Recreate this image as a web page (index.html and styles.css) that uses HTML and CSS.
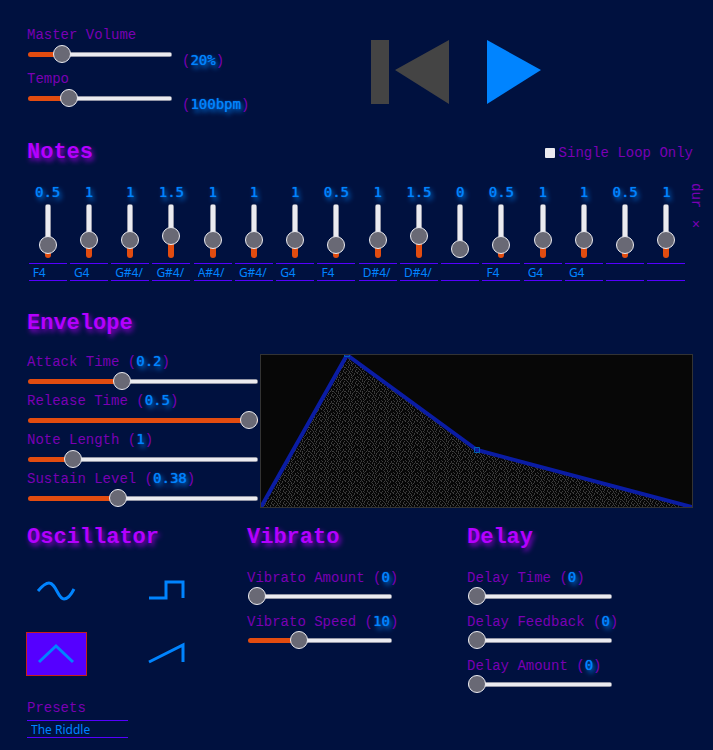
FILE: index.html
```html
<!DOCTYPE html>
<html lang="en">
<head>
<meta charset="utf-8">
<title>Synth</title>
<link rel="stylesheet" href="styles.css">
</head>
<body>
<header class="top">
  <div class="controls">
    <div class="control"><label for="volume">Master Volume</label><div class="line"><input class="slider" id="volume" type="range" value="20" style="--p:20%"><span class="readout">(<output class="value">20%</output>)</span></div></div>
    <div class="control"><label for="tempo">Tempo</label><div class="line"><input class="slider" id="tempo" type="range" value="25" style="--p:25%"><span class="readout">(<output class="value">100bpm</output>)</span></div></div>
  </div>
  <div class="transport">
    <button type="button" aria-label="Rewind"><svg width="78" height="64" viewBox="0 0 78 64"><path fill="#444" d="M0 0h18v64H0zM24 30 78 0v64z"/></svg></button>
    <button type="button" aria-label="Play"><svg width="54" height="64" viewBox="0 0 54 64"><path fill="#0084ff" d="M0 0 54 30 0 64z"/></svg></button>
  </div>
</header>

<section class="notes">
  <div class="notes-head">
    <h2>Notes</h2>
    <label class="loop"><input type="checkbox">Single Loop Only</label>
  </div>
  <div class="sequence">
    <div class="steps" id="steps"></div>
    <span class="duration">dur ×</span>
  </div>
</section>

<section class="envelope">
  <h2>Envelope</h2>
  <div class="envelope-body">
    <div class="controls tight">
      <div class="control"><label for="attack">Attack Time (<output class="value">0.2</output>)</label><input class="slider" id="attack" type="range" value="40" style="--p:40%"></div>
      <div class="control"><label for="release">Release Time (<output class="value">0.5</output>)</label><input class="slider" id="release" type="range" value="100" style="--p:100%"></div>
      <div class="control"><label for="length">Note Length (<output class="value">1</output>)</label><input class="slider" id="length" type="range" value="17" style="--p:17%"></div>
      <div class="control"><label for="sustain">Sustain Level (<output class="value">0.38</output>)</label><input class="slider" id="sustain" type="range" value="38" style="--p:38%"></div>
    </div>
    <svg class="graph" viewBox="0 0 431 152" preserveAspectRatio="none">
      <defs>
        <pattern id="grain" width="12" height="12" patternUnits="userSpaceOnUse">
          <path stroke="#404040" stroke-dasharray="1 2 1 1 1 3 1 1" d="M0 .5h12M2 2.5h10M1 4.5h11M0 6.5h11M3 8.5h9M1 10.5h10"/>
          <path stroke="#333" stroke-dasharray="1 3 1 2" d="M1 1.5h10M3 3.5h9M0 5.5h12M2 7.5h10M0 9.5h11M3 11.5h9"/>
        </pattern>
      </defs>
      <path fill="url(#grain)" d="M0 152 86 0 216 95 431 152z"/>
      <path fill="none" stroke="#0a1ca4" stroke-width="4" d="M0 152 86 0 216 95 431 152"/>
      <path fill="none" stroke="#0060b0" d="M83.500-2.500h5v4h-5zM213.500 92.500h5v5h-5z"/>
    </svg>
  </div>
</section>

<main class="modules">
  <section>
    <h2>Oscillator</h2>
    <div class="waves">
      <button type="button" aria-label="Sine"><svg viewBox="0 0 61 44"><path d="M12 23C17 17 20 15 23 15C30 15 32 31 38 31C42 31 45 27 48 21"/></svg></button>
      <button type="button" aria-label="Square"><svg viewBox="0 0 61 44"><path d="M12 30H29V14H46V30"/></svg></button>
      <button type="button" class="selected" aria-label="Triangle"><svg viewBox="0 0 61 44"><path d="M13 30 30 14 47 30"/></svg></button>
      <button type="button" aria-label="Sawtooth"><svg viewBox="0 0 61 44"><path d="M12 30 46 13V30"/></svg></button>
    </div>
    <div class="presets"><label for="preset">Presets</label><select id="preset"><option>The Riddle</option></select></div>
  </section>
  <section>
    <h2>Vibrato</h2>
    <div class="controls">
      <div class="control"><label for="vamount">Vibrato Amount (<output class="value">0</output>)</label><input class="slider" id="vamount" type="range" value="0" style="--p:0%"></div>
      <div class="control"><label for="vspeed">Vibrato Speed (<output class="value">10</output>)</label><input class="slider" id="vspeed" type="range" value="33" style="--p:33%"></div>
    </div>
  </section>
  <section>
    <h2>Delay</h2>
    <div class="controls">
      <div class="control"><label for="dtime">Delay Time (<output class="value">0</output>)</label><input class="slider" id="dtime" type="range" value="0" style="--p:0%"></div>
      <div class="control"><label for="dfeedback">Delay Feedback (<output class="value">0</output>)</label><input class="slider" id="dfeedback" type="range" value="0" style="--p:0%"></div>
      <div class="control"><label for="damount">Delay Amount (<output class="value">0</output>)</label><input class="slider" id="damount" type="range" value="0" style="--p:0%"></div>
    </div>
  </section>
</main>
<script src="script.js"></script>
</body>
</html>
```
FILE: script.js
```js
const notes = [
  [0.5, "F4"], [1, "G4"], [1, "G#4/"], [1.5, "G#4/"],
  [1, "A#4/"], [1, "G#4/"], [1, "G4"], [0.5, "F4"],
  [1, "D#4/"], [1.5, "D#4/"], [0, ""], [0.5, "F4"],
  [1, "G4"], [1, "G4"], [0.5, ""], [1, ""]
];

document.getElementById("steps").innerHTML = notes.map(([length, pitch], i) => `
  <div class="step">
    <label class="value" for="step${i}">${length}</label>
    <input class="slider vertical" id="step${i}" type="range" min="0" max="4" step="0.5" value="${length}" style="--p:${length * 25}%">
    <select aria-label="Pitch ${i + 1}"><option>${pitch}</option></select>
  </div>`).join("");
```
FILE: styles.css
```css
* { box-sizing: border-box; }

body {
  margin: 0;
  padding: 26px 20px 10px 27px;
  background: #00113f;
  color: #7a00b4;
  font: 14px/18px "Courier New", "Liberation Mono", monospace;
}

h2 {
  margin: 0;
  color: #b400ff;
  font-size: 22px;
  line-height: 26px;
  text-shadow: 2px 3px 5px #8c00d2;
}

button {
  padding: 0;
  border: 0;
  background: none;
}

button svg { display: block; }

.value {
  color: #0084ff;
  font-family: "DejaVu Sans Mono", monospace;
  text-shadow: 0 0 1px #0084ff, 2px 3px 5px #0084ff;
}

.controls {
  display: grid;
  gap: 7px;
}

.control {
  display: grid;
  gap: 1px;
}

.controls.tight { gap: 1px; }

.tight .control { gap: 2px; }

.control > label { height: 18px; }

.slider {
  --dir: to right;
  appearance: none;
  width: 144px;
  height: 18px;
  margin: 0 0 0 1px;
  background: none;
}

.slider::-webkit-slider-runnable-track {
  height: 5px;
  border-radius: 3px;
  background:
    linear-gradient(var(--dir), #e24c10 var(--p), transparent var(--p)),
    linear-gradient(#ebebf0, #ebebf0) center / calc(100% - 2px) calc(100% - 2px) no-repeat,
    #9295a5;
}

.slider::-webkit-slider-thumb {
  appearance: none;
  width: 18px;
  height: 18px;
  margin-top: -7px;
  border: 1px solid #ebebf0;
  border-radius: 50%;
  background: #696975;
}

.vertical {
  --dir: to top;
  writing-mode: vertical-lr;
  direction: rtl;
  width: 18px;
  height: 54px;
  margin: 0;
}

.vertical::-webkit-slider-runnable-track {
  width: 6px;
  height: auto;
}

.vertical::-webkit-slider-thumb {
  margin-top: 0;
  margin-left: -6px;
}

select {
  appearance: none;
  width: 38px;
  height: 18px;
  padding: 1px 4px 0;
  border: solid #5500ff;
  border-width: 1px 0;
  border-radius: 0;
  background: none;
  color: #0084ff;
  font: 12px/16px "Noto Sans", sans-serif;
}

.top {
  display: grid;
  grid-template-columns: 344px 1fr;
}

.line {
  display: flex;
  gap: 10px;
  height: 18px;
}

.readout { padding-top: 6px; }

.transport {
  display: flex;
  align-items: center;
  gap: 38px;
  padding-top: 10px;
}

.notes { margin-top: 33px; }

.notes-head {
  display: flex;
  justify-content: space-between;
  align-items: center;
}

.loop {
  display: flex;
  align-items: center;
  gap: 4px;
}

.loop input {
  appearance: none;
  width: 10px;
  height: 10px;
  margin: 0;
  border-radius: 1px;
  background: #ebebf0;
}

.sequence {
  display: flex;
  justify-content: space-between;
  margin: 17px -12px 0 0;
}

.steps {
  display: grid;
  grid-template-columns: repeat(16, 1fr);
  flex: 1;
}

.step {
  display: grid;
  justify-items: center;
}

.step .value { height: 21px; }

.step select { margin-top: 5px; }

.duration { writing-mode: vertical-rl; }

.envelope { margin-top: 30px; }

.envelope-body {
  display: grid;
  grid-template-columns: 233px 1fr;
  align-items: start;
  margin-top: 15px;
}

.tight .slider { width: 230px; }

.graph {
  width: 100%;
  height: 154px;
  margin-top: 2px;
  border: 1px solid #333;
  background: #070707;
}

.modules {
  display: grid;
  grid-template-columns: repeat(3, 1fr);
  margin-top: 17px;
  padding-right: 6px;
}

.modules .controls { margin-top: 17px; }

.waves {
  display: grid;
  grid-template-columns: 1fr 1fr;
  gap: 20px 0;
  margin: 17px 0 23px -1px;
}

.waves button {
  width: 61px;
  height: 44px;
}

.waves .selected {
  background: #5500ff;
  outline: 1px solid #c8201c;
  outline-offset: -1px;
}

.waves path {
  fill: none;
  stroke: #0084ff;
  stroke-width: 3;
}

.presets {
  display: grid;
  gap: 3px;
}

.presets select { width: 101px; }
```
